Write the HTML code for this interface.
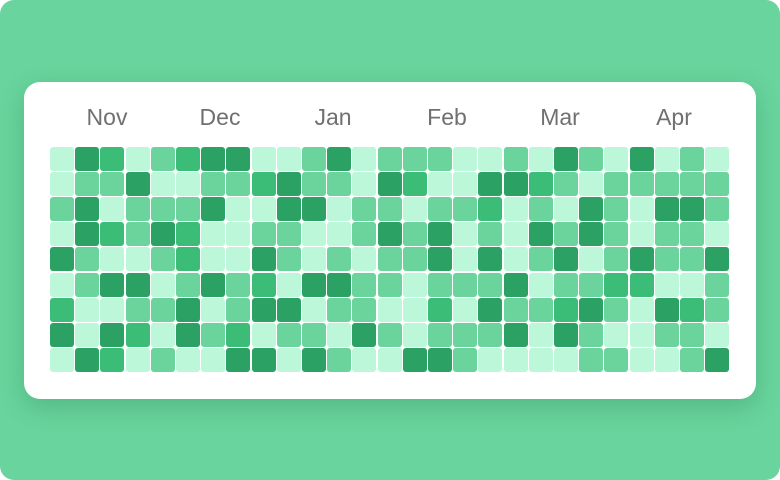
<!DOCTYPE html>
<html><head><meta charset="utf-8"><style>
html,body{margin:0;padding:0;background:#fff;}
#bg{position:relative;width:780px;height:480px;background:#69d49d;border-radius:14px;overflow:hidden;}
#card{position:absolute;left:24px;top:82px;width:732px;height:317px;background:#fff;border-radius:16px;box-shadow:0 8px 24px rgba(20,100,60,0.25);}
.m{position:absolute;top:22px;width:80px;margin-left:-40px;text-align:center;font-family:"Liberation Sans",sans-serif;font-size:23px;color:#707070;}
.c{position:absolute;width:24px;height:24px;border-radius:3px;}
.L{background:#bbf7d8}.M{background:#6ad49c}.B{background:#3bbd78}.D{background:#2ba163}
</style></head><body><div id="bg"><div id="card">
<div class="m" style="left:83px">Nov</div>
<div class="m" style="left:196px">Dec</div>
<div class="m" style="left:309px">Jan</div>
<div class="m" style="left:423px">Feb</div>
<div class="m" style="left:536px">Mar</div>
<div class="m" style="left:650px">Apr</div>
<div id="g"></div>
</div></div>
<script>
var rows=["LDBLMBDDLLMDLMMMLLMLDMLDLML","LMMDLLMMBDMMLDBLLDDBMLMMMMM","MDLMMMDLLDDLMMLMMBLMLDMLDDM","LDBMDBLLMMLLMDMDLMLDMDMLMML","DMLLMBLLDMLMLMMDLDLMDLMDMMD","LMDDLMDMBLDDMMLMMMDLMMBBLLM","BLLMMDLMDDLMMLLBLDMMBDMLDBM","DLDBLDMBLMMLDMLMMMDLDMLLMML","LDBLMLLDDLDMLLDDMLLLLMMLLMD"];
var h="";for(var r=0;r<9;r++)for(var c=0;c<27;c++){h+='<div class="c '+rows[r][c]+'" style="left:'+(26+c*25.2).toFixed(1)+'px;top:'+(65+r*25.1).toFixed(1)+'px"></div>';}
document.getElementById("g").innerHTML=h;
</script>
</body></html>
